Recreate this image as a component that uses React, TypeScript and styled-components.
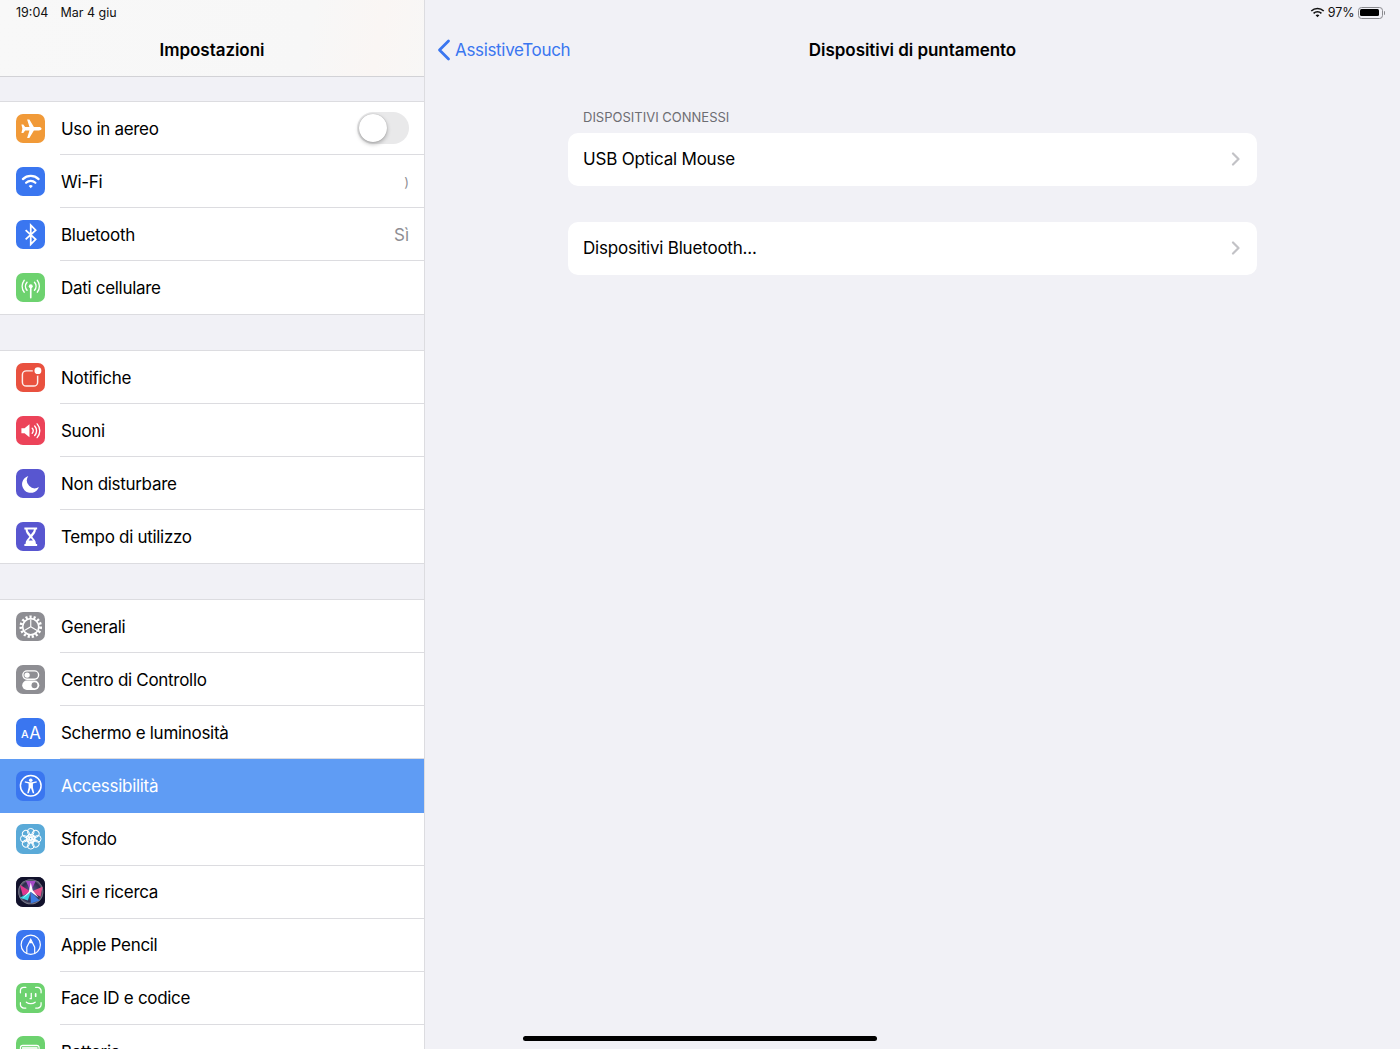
import React from "react";
import styled, { createGlobalStyle } from "styled-components";

const GlobalStyle = createGlobalStyle`
  html, body {
    margin: 0;
    padding: 0;
    height: 100%;
    background: #f1f1f6;
    font-family: Inter, "Liberation Sans", sans-serif;
    -webkit-font-smoothing: antialiased;
  }
`;

const W = "#fff";

const Plane = () => (
  <svg viewBox="0 0 30 30" fill={W}>
    <path d="M26 15c0-1-1.300-1.700-2.800-1.700h-5L13.600 5.600h-2.300l2.400 7.700H9.300L7.400 10.800H5.500l1 4.200-1 4.200h1.900l1.900-2.500h4.400l-2.400 7.700h2.300l4.600-7.700h5c1.500 0 2.800-.7 2.800-1.700z" />
  </svg>
);

const Wifi = () => (
  <svg viewBox="0 0 30 30" fill="none" stroke={W} strokeWidth="2.300" strokeLinecap="round">
    <path d="M7 12.300a11.600 11.600 0 0 1 16 0" />
    <path d="M10.300 16a6.900 6.900 0 0 1 9.400 0" />
    <path d="M12.900 19.400L15 21.500l2.100-2.100a3 3 0 0 0-4.200 0z" fill={W} stroke="none" />
  </svg>
);

const BluetoothGlyph = () => (
  <svg viewBox="0 0 30 30" fill="none" stroke={W} strokeWidth="1.800">
    <path d="M9.800 10.200L20 19.700l-5 5V5.300l5 5L9.800 19.800" />
  </svg>
);

const Antenna = () => (
  <svg viewBox="0 0 30 30" fill="none" stroke={W} strokeWidth="1.500" strokeLinecap="round">
    <circle cx="15" cy="13.500" r="2" fill={W} stroke="none" />
    <path d="M15 14v11" strokeWidth="1.700" />
    <path d="M11.200 9.500a6 6 0 0 0 0 8M18.800 9.500a6 6 0 0 1 0 8" />
    <path d="M8.300 7.500a10 10 0 0 0 0 12M21.700 7.500a10 10 0 0 1 0 12" />
  </svg>
);

const Bell = () => (
  <svg viewBox="0 0 30 30" fill="none">
    <rect x="6.500" y="8" width="15.500" height="15.500" rx="4" stroke={W} strokeWidth="1.500" opacity="0.9" />
    <circle cx="22" cy="8" r="5" fill="#e9513f" />
    <circle cx="22.300" cy="7.800" r="3.500" fill={W} />
  </svg>
);

const Speaker = () => (
  <svg viewBox="0 0 30 30" fill="none" stroke={W} strokeWidth="1.400" strokeLinecap="round">
    <path d="M5.500 12.500h3.200l5-4v13l-5-4H5.500z" fill={W} stroke="none" />
    <path d="M16.500 12.500a3.500 3.500 0 0 1 0 5" />
    <path d="M19 10.200a7 7 0 0 1 0 9.600" />
    <path d="M21.500 8a10.500 10.500 0 0 1 0 14" />
  </svg>
);

const Moon = () => (
  <svg viewBox="0 0 30 30" fill={W}>
    <path d="M12.500 7a8.800 8.800 0 1 0 10.800 11.300 8 8 0 0 1-10.800-11.300z" />
  </svg>
);

const Hourglass = () => (
  <svg viewBox="0 0 30 30">
    <path
      fill={W}
      d="M8.500 5.500h13v2.200h-1.200c0 3.500-2.500 5.500-3.800 7.300 1.300 1.800 3.800 3.800 3.800 7.300h1.200v2.200h-13v-2.200h1.200c0-3.500 2.500-5.500 3.800-7.300-1.300-1.800-3.800-3.800-3.800-7.300H8.500z"
    />
    <path fill="#5856d0" d="M11.800 7.700h6.400c-.2 2-2.100 3.800-3.200 5.300-1.100-1.500-3-3.300-3.200-5.300z" />
    <path fill="#5856d0" d="M12.800 18.800c.7-.9 1.500-1.700 2.200-2.500.7.8 1.500 1.600 2.200 2.500z" />
  </svg>
);

const Gear = () => (
  <svg viewBox="0 0 30 30" fill="none" stroke={W}>
    <circle cx="15" cy="15" r="10" strokeWidth="3" strokeDasharray="2.200 1.940" />
    <circle cx="15" cy="15" r="8.200" strokeWidth="1.700" />
    <path d="M15 15V7.500M15 15l6.500 3.800M15 15l-6.500 3.800" strokeWidth="1.200" />
  </svg>
);

const Switches = () => (
  <svg viewBox="0 0 30 30">
    <rect x="7" y="6" width="16" height="8.500" rx="4.250" fill="none" stroke={W} strokeWidth="1.400" />
    <circle cx="11.300" cy="10.250" r="2.700" fill={W} />
    <rect x="6.300" y="15.800" width="17.400" height="9.500" rx="4.750" fill={W} />
    <circle cx="18.800" cy="20.550" r="3" fill="#8e8e93" />
  </svg>
);

const TextSize = () => (
  <svg viewBox="0 0 30 30" fill={W} fontFamily="Inter, sans-serif">
    <text x="5" y="20" fontSize="11" fontWeight="500">A</text>
    <text x="13.500" y="21" fontSize="17">A</text>
  </svg>
);

const Access = () => (
  <svg viewBox="0 0 30 30" fill="none" stroke={W}>
    <circle cx="15" cy="15" r="10.500" strokeWidth="1.500" />
    <circle cx="15" cy="9.300" r="1.800" fill={W} stroke="none" />
    <path
      d="M8.800 11.800l4 1v4l-1.400 5.800h1.500l1.800-5h.6l1.800 5h1.500l-1.400-5.800v-4l4-1-.3-1.300-4.700 1h-2.400l-4.700-1z"
      fill={W}
      stroke="none"
    />
  </svg>
);

const PETALS = [0, 45, 90, 135, 180, 225, 270, 315];

const Flower = () => (
  <svg viewBox="0 0 30 30" fill="none" stroke={W} strokeWidth="1">
    {PETALS.map((a) => (
      <circle key={a} cx="15" cy="7.900" r="3.400" transform={`rotate(${a} 15 15)`} />
    ))}
    {PETALS.map((a) => (
      <circle key={a} cx="15" cy="12" r="1.800" transform={`rotate(${a + 22} 15 15)`} />
    ))}
    <circle cx="15" cy="15" r="1.300" />
  </svg>
);

const Siri = () => (
  <svg viewBox="0 0 30 30">
    <defs>
      <radialGradient id="siriBg" cx="50%" cy="50%" r="50%">
        <stop offset="0%" stopColor="#63609a" />
        <stop offset="80%" stopColor="#2c2a4c" />
        <stop offset="92%" stopColor="#5a5a70" />
        <stop offset="100%" stopColor="#8a8a98" />
      </radialGradient>
      <filter id="siriBlur">
        <feGaussianBlur stdDeviation="0.600" />
      </filter>
    </defs>
    <rect width="30" height="30" fill="#12122c" />
    <circle cx="15" cy="15" r="12.800" fill="url(#siriBg)" />
    <g filter="url(#siriBlur)">
      <path d="M15 15L4 8 7 19z" fill="#e0398f" />
      <path d="M15 15L10 4 20 4z" fill="#a54bc9" />
      <path d="M15 15L27 10 25 20z" fill="#e44e8c" />
      <path d="M15 15L4 21 12 24z" fill="#39d0e0" />
      <path d="M15 15L24 24 15 27z" fill="#3c7be0" />
      <path d="M15 15L6 22.500 13 15 15 5.500 17 13.500 23 21z" fill="#fff" />
    </g>
  </svg>
);

const Pencil = () => (
  <svg viewBox="0 0 30 30" fill="none" stroke={W} strokeWidth="1.200">
    <circle cx="15" cy="15" r="9.800" />
    <path d="M11 23.800V17.500L15 9.500l4 8v6.300" />
    <path d="M13.300 13.500h3.400L15 9.500z" fill={W} stroke="none" />
  </svg>
);

const Face = () => (
  <svg viewBox="0 0 30 30" fill="none" stroke={W} strokeWidth="1.300" strokeLinecap="round">
    <path d="M4.500 10V8a3.500 3.500 0 0 1 3.500-3.500h2M20 4.500h2A3.500 3.500 0 0 1 25.500 8v2M25.500 20v2a3.500 3.500 0 0 1-3.500 3.500h-2M10 25.500H8A3.500 3.500 0 0 1 4.500 22v-2" />
    <path d="M10 11v2.500M20 11v2.500" strokeWidth="1.700" />
    <path d="M15.500 10.500v5.500h-1.200" />
    <path d="M10.500 19.500c2.500 2 6.500 2 9 0" />
  </svg>
);

const BatteryGlyph = () => (
  <svg viewBox="0 0 30 30" fill="none">
    <rect x="4.500" y="9.500" width="19" height="11" rx="2.500" stroke={W} strokeWidth="1.200" />
    <rect x="6" y="11" width="16" height="8" rx="1.200" fill={W} opacity="0.85" />
  </svg>
);

type SettingRow = {
  label: string;
  color: string;
  icon: React.ReactNode;
  value?: string;
  smallValue?: boolean;
  toggle?: boolean;
  selected?: boolean;
};

const GROUPS: SettingRow[][] = [
  [
    { label: "Uso in aereo", color: "#f19a38", icon: <Plane />, toggle: true },
    { label: "Wi-Fi", color: "#3a76f0", icon: <Wifi />, value: ")", smallValue: true },
    { label: "Bluetooth", color: "#3a76f0", icon: <BluetoothGlyph />, value: "Sì" },
    { label: "Dati cellulare", color: "#6dd26f", icon: <Antenna /> },
  ],
  [
    { label: "Notifiche", color: "#e9513f", icon: <Bell /> },
    { label: "Suoni", color: "#ec4359", icon: <Speaker /> },
    { label: "Non disturbare", color: "#5856d0", icon: <Moon /> },
    { label: "Tempo di utilizzo", color: "#5856d0", icon: <Hourglass /> },
  ],
  [
    { label: "Generali", color: "#8e8e93", icon: <Gear /> },
    { label: "Centro di Controllo", color: "#8e8e93", icon: <Switches /> },
    { label: "Schermo e luminosità", color: "#3a76f0", icon: <TextSize /> },
    { label: "Accessibilità", color: "#3a76f0", icon: <Access />, selected: true },
    { label: "Sfondo", color: "#5aaad8", icon: <Flower /> },
    { label: "Siri e ricerca", color: "#12122c", icon: <Siri /> },
    { label: "Apple Pencil", color: "#3a76f0", icon: <Pencil /> },
    { label: "Face ID e codice", color: "#6dd26f", icon: <Face /> },
    { label: "Batteria", color: "#6dd26f", icon: <BatteryGlyph /> },
  ],
];

export default function App() {
  return (
    <>
      <GlobalStyle />
      <Screen>
        <Sidebar>
          <SidebarHeader>
            <StatusLeft>
              <span>19:04</span>
              <span>Mar 4 giu</span>
            </StatusLeft>
            <BarTitle>Impostazioni</BarTitle>
          </SidebarHeader>
          <GroupList>
            {GROUPS.map((rows) => (
              <Group key={rows[0].label}>
                {rows.map((row, i) => (
                  <Row key={row.label} $selected={row.selected}>
                    <IconTile $color={row.color}>{row.icon}</IconTile>
                    <RowBody $last={i === rows.length - 1 || row.selected}>
                      <RowLabel $selected={row.selected}>{row.label}</RowLabel>
                      {row.value && <RowValue $small={row.smallValue}>{row.value}</RowValue>}
                      {row.toggle && (
                        <Toggle>
                          <Knob />
                        </Toggle>
                      )}
                    </RowBody>
                  </Row>
                ))}
              </Group>
            ))}
          </GroupList>
        </Sidebar>
        <Detail>
          <StatusRight>
            <svg viewBox="0 0 16 12" width="15" height="11">
              <path fill="none" stroke="#111" strokeWidth="1.700" d="M1.200 4.300a9.800 9.800 0 0 1 13.600 0M3.700 6.900a6.200 6.200 0 0 1 8.600 0" />
              <path fill="#111" d="M5.900 9.100L8 11.200l2.100-2.100a3 3 0 0 0-4.200 0z" />
            </svg>
            <span>97%</span>
            <BatteryShell>
              <BatteryFill />
            </BatteryShell>
            <BatteryCap />
          </StatusRight>
          <NavBar>
            <BackLink>
              <svg viewBox="0 0 14 22" width="14" height="22" fill="none" stroke="#3a76f0" strokeWidth="2.800" strokeLinecap="round" strokeLinejoin="round">
                <path d="M11.500 2L2.500 11l9 9" />
              </svg>
              AssistiveTouch
            </BackLink>
            <BarTitle>Dispositivi di puntamento</BarTitle>
          </NavBar>
          <Content>
            <SectionLabel>Dispositivi connessi</SectionLabel>
            <Card>
              USB Optical Mouse
              <Chevron />
            </Card>
            <CardGap />
            <Card>
              Dispositivi Bluetooth...
              <Chevron />
            </Card>
          </Content>
        </Detail>
        <HomeBar />
      </Screen>
    </>
  );
}

const Chevron = () => (
  <svg viewBox="0 0 10 14" width="10" height="14" fill="none" stroke="#c2c2c6" strokeWidth="2.200" strokeLinecap="round" strokeLinejoin="round">
    <path d="M2 1.500L7.500 7 2 12.500" />
  </svg>
);

const Screen = styled.div`
  position: relative;
  display: flex;
  width: 1400px;
  height: 1049px;
  overflow: hidden;
  background: #f1f1f6;
  color: #000;
`;

const Sidebar = styled.aside`
  width: 424px;
  flex-shrink: 0;
  border-right: 1px solid #dcdce0;
  display: flex;
  flex-direction: column;
`;

const SidebarHeader = styled.header`
  height: 76px;
  flex-shrink: 0;
  border-bottom: 1px solid #d2d2d6;
  background: linear-gradient(100deg, #f8f8f8 0%, #f7f7f7 72%, #faf6f4 88%, #f8f7f6 100%);
`;

const StatusLeft = styled.div`
  height: 25px;
  padding-left: 16px;
  display: flex;
  align-items: center;
  gap: 12px;
  font-size: 12.500px;
  color: #111;
`;

const BarTitle = styled.div`
  height: 50px;
  display: flex;
  align-items: center;
  justify-content: center;
  font-size: 17px;
  font-weight: 600;
  letter-spacing: -0.05px;
  color: #000;
`;

const GroupList = styled.div`
  padding-top: 24px;
  display: flex;
  flex-direction: column;
  gap: 35px;
`;

const Group = styled.section`
  background: #fff;
  border-top: 1px solid #dcdce0;
  border-bottom: 1px solid #dcdce0;
`;

const Row = styled.div<{ $selected?: boolean }>`
  height: ${(p) => (p.$selected ? "53.6px" : "53px")};
  box-sizing: border-box;
  padding-left: 15.500px;
  display: flex;
  align-items: center;
  gap: 15px;
  background: ${(p) => (p.$selected ? "#5f9cf4" : "transparent")};
`;

const IconTile = styled.div<{ $color: string }>`
  width: 29.500px;
  height: 29.500px;
  flex-shrink: 0;
  border-radius: 7px;
  overflow: hidden;
  background: ${(p) => p.$color};
  svg {
    display: block;
    width: 100%;
    height: 100%;
  }
`;

const RowBody = styled.div<{ $last?: boolean }>`
  flex: 1;
  align-self: stretch;
  display: flex;
  align-items: center;
  justify-content: space-between;
  padding-right: 15px;
  border-bottom: ${(p) => (p.$last ? "none" : "1px solid #dcdce0")};
`;

const RowLabel = styled.span<{ $selected?: boolean }>`
  padding: 1px 0 0 1px;
  font-size: 17px;
  letter-spacing: -0.3px;
  color: ${(p) => (p.$selected ? "#fff" : "#000")};
`;

const RowValue = styled.span<{ $small?: boolean }>`
  padding-top: 1px;
  font-size: ${(p) => (p.$small ? "13px" : "17px")};
  color: #8e8e93;
`;

const Toggle = styled.div`
  width: 52px;
  height: 32px;
  box-sizing: border-box;
  padding: 2px;
  border-radius: 16px;
  background: #e9e9ea;
`;

const Knob = styled.div`
  width: 28px;
  height: 28px;
  border-radius: 50%;
  background: #fff;
  box-shadow: 0 2px 4px rgba(0, 0, 0, 0.28), 0 0 1px rgba(0, 0, 0, 0.3);
`;

const Detail = styled.main`
  flex: 1;
  min-width: 0;
  display: flex;
  flex-direction: column;
`;

const StatusRight = styled.div`
  height: 25px;
  padding-right: 15px;
  display: flex;
  align-items: center;
  justify-content: flex-end;
  gap: 3px;
  font-size: 12.500px;
  color: #111;
`;

const BatteryShell = styled.div`
  width: 25px;
  height: 12px;
  box-sizing: border-box;
  padding: 1.500px;
  border: 1px solid #8a8a8e;
  border-radius: 3.500px;
`;

const BatteryFill = styled.div`
  height: 100%;
  width: 97%;
  border-radius: 1.500px;
  background: #000;
`;

const BatteryCap = styled.div`
  width: 1.500px;
  height: 4px;
  margin-left: -2px;
  border-radius: 0 1px 1px 0;
  background: #8a8a8e;
`;

const NavBar = styled.div`
  position: relative;
  height: 51px;
  flex-shrink: 0;
`;

const BackLink = styled.div`
  position: absolute;
  left: 12px;
  top: 0;
  height: 50px;
  display: flex;
  align-items: center;
  gap: 4px;
  font-size: 17px;
  letter-spacing: -0.33px;
  color: #3a76f0;
`;

const Content = styled.div`
  width: 689px;
  margin: 0 auto;
  padding-top: 33px;
`;

const SectionLabel = styled.div`
  height: 16px;
  line-height: 17px;
  padding-left: 15px;
  margin-bottom: 8px;
  font-size: 13px;
  text-transform: uppercase;
  color: #6d6d72;
`;

const Card = styled.div`
  height: 53px;
  box-sizing: border-box;
  padding: 0 16px 1px 15px;
  display: flex;
  align-items: center;
  justify-content: space-between;
  border-radius: 10px;
  background: #fff;
  font-size: 17px;
  letter-spacing: -0.2px;
`;

const CardGap = styled.div`
  height: 36px;
`;

const HomeBar = styled.div`
  position: absolute;
  left: 523px;
  bottom: 8px;
  width: 354px;
  height: 5px;
  border-radius: 3px;
  background: #000;
`;
